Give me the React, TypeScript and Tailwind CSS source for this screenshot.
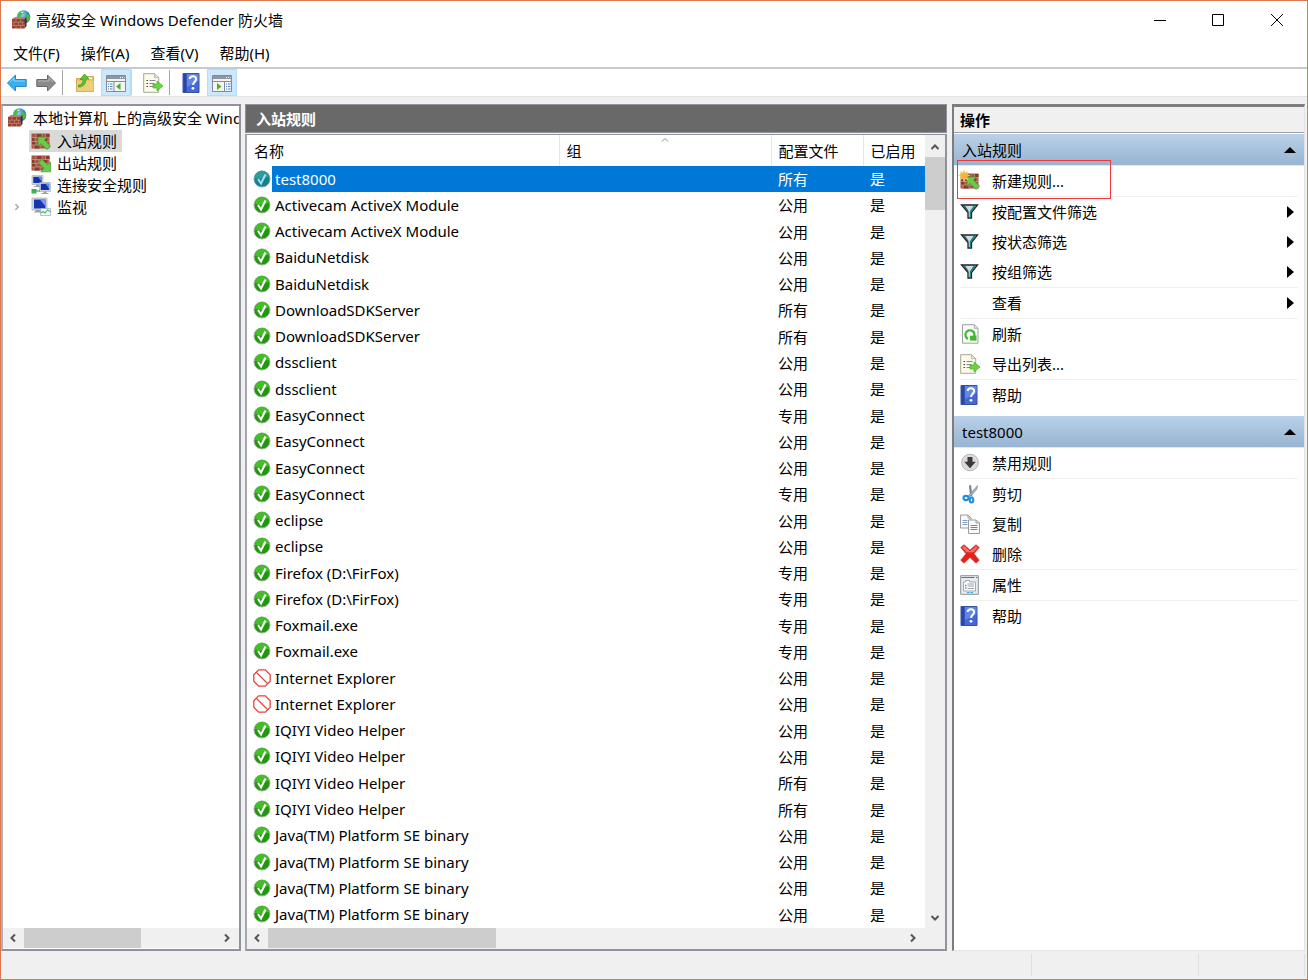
import React from 'react';

type IconProps = { className?: string };

const FirewallIcon = ({ className = 'size-5' }: IconProps) => (
  <svg viewBox="0 0 20 20" className={className} aria-hidden="true">
    <defs>
      <radialGradient id="globe" cx="0.35" cy="0.3" r="0.8">
        <stop offset="0" stopColor="#a9e2fa" />
        <stop offset="0.5" stopColor="#3b95e0" />
        <stop offset="1" stopColor="#123f94" />
      </radialGradient>
    </defs>
    <circle cx="12.5" cy="7" r="6.8" fill="url(#globe)" />
    <path d="M9 1.5c2-1 4-1 5 0l-1 2-2 1-1 2-3 1c-1-2 0-5 2-6zM15 4l3 1 1 3-2 4-2-2v-3l-1-1z" fill="#4dbb4a" />
    <path d="M10 2l2-.6 1 .6-2 1.4z" fill="#e6f7df" />
    <path d="M1 9l3-2h11l-1.5 2z" fill="#c07c66" />
    <path d="M1 9h12.500v9.500H1z" fill="#964230" />
    <path d="M13.500 9L15.500 7v9l-2 2.500z" fill="#5a2419" />
    <path d="M1 12.200h12.500M1 15.400h12.500M5 9v3.200M9.500 9v3.200M3 12.200v3.200M7.500 12.200v3.200M11.500 12.200v3.200M5 15.400v3.100M9.500 15.400v3.100" stroke="#cf9a8a" strokeWidth="0.6" />
  </svg>
);

const RuleIcon = ({ kind }: { kind: 'in' | 'out' | 'new' }) => (
  <svg viewBox="0 0 20 18" className="h-[18px] w-5 shrink-0 overflow-visible" aria-hidden="true">
    <path d="M.5 1.500h18v15H.5z" fill="#a65340" />
    <path d="M5 2h6v3.500H5zM11 5.500h6v4h-6zM1 9.500h4v3.500H1zM3 13h6v3.500H3zM14 2h4.500v3H14zM1 5.500h3v4H1z" fill="#8a3b2b" />
    <path d="M.5 5.500h18M.5 9.500h18M.5 13h18M5 1.500v4M11 1.500v4M14.500 1.500v4M4 5.500v4M8 5.500v4M17 5.500v4M5 9.500V13M11 9.500V13M3 13v3.500M9 13v3.500M15 13v3.500" stroke="#cda195" strokeWidth="0.7" />
    {kind === 'out' ? (
      <path d="M19.500 17.800V8l-3 2.800L11 5.300 7.500 8.800l5.500 5.500-3.200 3.500z" fill="#6cc94b" stroke="#3c9a2a" strokeWidth="0.7" />
    ) : (
      <path d="M7 5h9.500l-3 3 6 6-3.500 3.500-6-6-3 3z" fill="#6cc94b" stroke="#3c9a2a" strokeWidth="0.7" />
    )}
    {kind === 'new' && (
      <path d="M4-2.500l1 3.300 3-1.800-1.500 3.200L10 3.500 6.500 4.700 8 8 5 6.200 4 9.500 3 6.200 0 8l1.500-3.300L-1.500 3.500l3-1.300L0-1l3 1.800z" fill="#f9b52c" stroke="#fde0a0" strokeWidth="0.500" />
    )}
  </svg>
);

const Monitor = ({ x, y }: { x: number; y: number }) => (
  <g transform={`translate(${x} ${y})`}>
    <path d="M0 0h11v9H0z" fill="#d2d7dc" stroke="#a3aab1" strokeWidth="0.6" />
    <path d="M1.300 1.300h8.400v6.200H1.300z" fill="#1430ac" />
    <path d="M6 1.300h3.700v5z" fill="#6d8af0" />
    <path d="M4 9h3v1.500h2v1H2v-1h2z" fill="#9aa2a8" />
  </g>
);

const ConnectionIcon = () => (
  <svg viewBox="0 0 20 20" className="size-5 shrink-0" aria-hidden="true">
    <Monitor x={1} y={.5} />
    <Monitor x={8.5} y={7.5} />
    <path d="M.5 14h5v4.500h-5z" fill="#38b54a" />
    <path d="M5 16h4" stroke="#2c9a3c" />
  </svg>
);

const MonitoringIcon = () => (
  <svg viewBox="0 0 20 20" className="size-5 shrink-0" aria-hidden="true">
    <path d="M1 1h15v12H1z" fill="#d5dae0" stroke="#a3aab1" strokeWidth="0.7" />
    <path d="M3 2.500h11.500v9H3z" fill="#1636b4" />
    <path d="M9 2.500h5.500v7z" fill="#7d96ef" />
    <path d="M5 13h5v2.500H3z" fill="#9aa2a8" />
    <path d="M9.500 11.500h10v7h-10z" fill="#f4fbff" stroke="#8fa9bb" strokeWidth="0.7" />
    <path d="M10 16l2-1.500 2 1.500 2.500-3 3 1.500" fill="none" stroke="#49b558" strokeWidth="1.100" />
  </svg>
);

const ArrowIcon = ({ forward }: { forward?: boolean }) => (
  <svg viewBox="0 0 20 18" className="h-[18px] w-5" aria-hidden="true">
    {forward ? (
      <path d="M19.500 9L11.500 1v4.500H.8v7h10.700V17z" fill="#8b8b8b" stroke="#686868" />
    ) : (
      <path d="M.5 9l8-8v4.500h10.700v7H8.500V17z" fill="#36b0f0" stroke="#2d86bd" />
    )}
    {forward ? <path d="M2 7h11V4l4 4" fill="none" stroke="#b5b5b5" /> : <path d="M3 8l4-4v3h11" fill="none" stroke="#8ad7fa" />}
  </svg>
);

const FolderIcon = () => (
  <svg viewBox="0 0 20 20" className="size-5" aria-hidden="true">
    <path d="M1.500 5.500h6l1.500-2h9.500v15h-17z" fill="#e8c463" stroke="#c99d3c" strokeWidth="0.8" />
    <path d="M12 4.500h5v1.500h-5z" fill="#fff" />
    <path d="M2 8h16.500v10.200H2z" fill="#efcd7a" />
    <path d="M3.500 12C7 12 8 9.500 8 6.500H5L9.500 1 14 6h-3c0 5-3 8-7.500 8z" fill="#58c82c" stroke="#32911a" strokeWidth="0.700" />
  </svg>
);

const PaneIcon = ({ side }: { side: 'left' | 'right' }) => (
  <svg viewBox="0 0 20 18" className="h-[18px] w-5" aria-hidden="true">
    <path d="M.5 1.500h19v16H.5z" fill="#f4f4f4" stroke="#858b94" />
    <path d="M1 2h18v3H1z" fill="#8e959f" />
    <path d="M14 3.500h1M16 3.500h1M18 3.500h.5" stroke="#fff" />
    <path d="M1 7.500h18" stroke="#858b94" />
    {side === 'left' ? (
      <>
        <path d="M8 8v9.500" stroke="#858b94" />
        <path d="M2 10h1m1 0h2.500M2 12.500h1m1 0h2.500M2 15h1m1 0h2.500" stroke="#4d84b8" />
        <path d="M14.500 9v7L10 12.500z" fill="#4faf29" />
      </>
    ) : (
      <>
        <path d="M12.500 8v9.500" stroke="#858b94" />
        <path d="M14 10h1m1 0h2.500M14 12.500h1m1 0h2.500M14 15h1m1 0h2.500" stroke="#4d84b8" />
        <path d="M5 9v7l4.500-3.500z" fill="#4faf29" />
      </>
    )}
  </svg>
);

const ExportIcon = () => (
  <svg viewBox="0 0 20 20" className="size-5 shrink-0" aria-hidden="true">
    <path d="M.7.700h11l4 4v14.600H.7z" fill="#fdfbe8" stroke="#a6a698" />
    <path d="M11.500.7v4h4" fill="#e3e3da" stroke="#a6a698" strokeWidth="0.7" />
    <path d="M3.500 7.500h1.500M3.500 10.500h1.500M3.500 13.500h1.500" stroke="#444" strokeWidth="1.200" />
    <path d="M6.500 7.500h6M6.500 10.500h5M6.500 13.500h5" stroke="#87879b" />
    <path d="M10 11h4V8l6 5-6 5v-3h-4z" fill="#6ad63d" stroke="#3fa325" strokeWidth="0.6" />
  </svg>
);

const HelpIcon = () => (
  <svg viewBox="0 0 20 20" className="size-5 shrink-0" aria-hidden="true">
    <path d="M1 .5h16v19H1z" fill="#4468d6" stroke="#34509f" />
    <path d="M1.500 1h3v18h-3z" fill="#2746a6" />
    <path d="M5 1h11.500v7L5 14z" fill="#6385e3" />
    <path d="M7.700 6c.2-3.800 6.600-3.700 6.400.2-.1 2.500-3 2.600-3 5.800" fill="none" stroke="#fff" strokeWidth="2.100" />
    <circle cx="11" cy="15.300" r="1.400" fill="#fff" />
  </svg>
);

const FunnelIcon = () => (
  <svg viewBox="0 0 20 20" className="size-5 shrink-0" aria-hidden="true">
    <path d="M1.500 3h16l-6 7.500V16H8v-5.500z" fill="#d5dcdd" stroke="#1b2527" strokeWidth="1.300" />
    <path d="M13.500 4H16l-5 6v5.300H9.700V9.500z" fill="#13868a" />
    <path d="M2.800 3.700H5l4 5.800H7.500z" fill="#2c5a5d" />
  </svg>
);

const RefreshIcon = () => (
  <svg viewBox="0 0 20 20" className="size-5 shrink-0" aria-hidden="true">
    <path d="M2.500.7h12l3.500 3.500v15H2.500z" fill="#f8f8f8" stroke="#a1a1a1" />
    <path d="M14.300.7v3.700H18" fill="#ddd" stroke="#a1a1a1" strokeWidth="0.7" />
    <path d="M8 14.800a4.500 4.500 0 1 1 5.500-1.300" fill="none" stroke="#41b832" strokeWidth="2.200" />
    <path d="M10 11.800l6.500-.3v5.200l-6.500-.2z" fill="#41b832" />
  </svg>
);

const DisableIcon = () => (
  <svg viewBox="0 0 20 20" className="size-5 shrink-0" aria-hidden="true">
    <circle cx="10" cy="9.500" r="8.300" fill="#dcdcdc" stroke="#b5b5b5" />
    <path d="M7.500 4h5v4.800h3.300L10 15.300 4.200 8.800h3.300z" fill="#3a3a3a" />
  </svg>
);

const CutIcon = () => (
  <svg viewBox="0 0 20 20" className="size-5 shrink-0" aria-hidden="true">
    <path d="M9 1.500l1 9.500 2.500 2L11 1z" fill="#73828f" />
    <path d="M17.500 1.500L9 11l-1 2 3-1L17 5z" fill="#a1b0bb" stroke="#6c7b87" strokeWidth="0.500" />
    <ellipse cx="6" cy="14" rx="2.500" ry="2.100" fill="none" stroke="#1e8fe0" strokeWidth="2.100" />
    <ellipse cx="11.500" cy="16" rx="1.800" ry="2.500" fill="none" stroke="#1e8fe0" strokeWidth="2.100" />
  </svg>
);

const CopyIcon = () => (
  <svg viewBox="0 0 20 20" className="size-5 shrink-0" aria-hidden="true">
    <path d="M.5 1h7.500l3 3v10H.5z" fill="#fafafa" stroke="#9b9b9b" />
    <path d="M8 1v3h3" fill="none" stroke="#9b9b9b" />
    <path d="M2.500 6.500h5M2.500 8.500h5M2.500 10.500h5" stroke="#7e9ec6" />
    <path d="M8.500 6h7.500l3.500 3v10.500h-11z" fill="#fafafa" stroke="#9b9b9b" />
    <path d="M16 6v3h3.500" fill="none" stroke="#9b9b9b" />
    <path d="M10.500 11.500h7M10.500 13.500h7M10.500 15.500h7" stroke="#6488bd" />
  </svg>
);

const DeleteIcon = () => (
  <svg viewBox="0 0 20 20" className="size-5 shrink-0" aria-hidden="true">
    <path d="M.7 3.500L4 .7l6 5.300L16 .7l3.300 2.800L14 9.700l5.300 6.500-3.300 3-6-5.700-6 5.700-3.300-3L6 9.700z" fill="#e2221c" stroke="#c9352f" strokeWidth="0.600" />
    <path d="M2 3.500L4 2l6 5.300L16 2l2 1.500-4.500 4.700h-7z" fill="#f0716b" />
  </svg>
);

const PropertiesIcon = () => (
  <svg viewBox="0 0 20 20" className="size-5 shrink-0" aria-hidden="true">
    <path d="M.7.700h17.600v18.600H.7z" fill="#e9ecef" stroke="#8b929a" />
    <path d="M1.500 2.500h13M16 2.500h1.500" stroke="#69727c" />
    <path d="M3.500 7h2V5.500h4V7h6v9h-12z" fill="#fff" stroke="#a3abb3" />
    <path d="M5 10.500h1.500M5 13h1.500" stroke="#27a8d8" strokeWidth="1.300" />
    <path d="M7.500 9h6.500M7.500 11h6.500M7.500 13.500h6.500" stroke="#9aa1a9" />
    <path d="M7 17.700h2.500m1 0H13" stroke="#35b3e6" strokeWidth="1.300" />
  </svg>
);

const StatusIcon = ({ status, selected }: { status: 'allow' | 'block'; selected?: boolean }) => (
  <svg viewBox="0 0 18 18" className="size-[18px] shrink-0" aria-hidden="true">
    {status === 'block' ? (
      <>
        <path d="M5.700.8h6.600l4.900 4.900v6.600l-4.900 4.900H5.700L.8 12.300V5.700z" fill="#fff" stroke="#e3473e" strokeWidth="1.300" />
        <path d="M3.500 3.500l11 11" stroke="#e3473e" strokeWidth="1.300" />
      </>
    ) : (
      <>
        <circle cx="9" cy="9" r="8" fill={selected ? '#14818c' : '#22960f'} stroke={selected ? '#6ba6c2' : '#9db39a'} />
        <path d="M2 8a7 6.800 0 0 1 14-1c-4 0-6 3-14 1z" fill={selected ? '#2f9c9a' : '#45bc2a'} />
        <path d="M5 9l3 4.500L12.500 4.500" fill="none" stroke={selected ? '#a3dcf7' : '#fff'} strokeWidth="2.100" />
      </>
    )}
  </svg>
);

const Chevron = ({ d, className = 'size-5' }: { d: string; className?: string }) => (
  <svg viewBox="0 0 20 20" className={className} fill="none" stroke="#555" strokeWidth="2" aria-hidden="true">
    <path d={d} />
  </svg>
);

const LEFT = 'M12 6.500L8.500 10l3.500 3.500';
const RIGHT = 'M8 6.500l3.500 3.500L8 13.500';
const UP = 'M6.500 12L10 8.500l3.500 3.500';
const DOWN = 'M6.500 8l3.500 3.500L13.500 8';

const HorizontalScrollbar = ({ thumb }: { thumb: string }) => (
  <div className="flex h-5 min-w-0 flex-1 bg-[#f0f0f0]">
    <button aria-label="向左滚动" className="w-5 shrink-0"><Chevron d={LEFT} /></button>
    <div className="min-w-0 flex-1 px-px">
      <div className={`h-5 bg-[#cdcdcd] ${thumb}`} />
    </div>
    <button aria-label="向右滚动" className="flex w-[22px] shrink-0"><Chevron d={RIGHT} /></button>
  </div>
);

const rules: [string, string, 'allow' | 'block'][] = [
  ['test8000', '所有', 'allow'],
  ['Activecam ActiveX Module', '公用', 'allow'],
  ['Activecam ActiveX Module', '公用', 'allow'],
  ['BaiduNetdisk', '公用', 'allow'],
  ['BaiduNetdisk', '公用', 'allow'],
  ['DownloadSDKServer', '所有', 'allow'],
  ['DownloadSDKServer', '所有', 'allow'],
  ['dssclient', '公用', 'allow'],
  ['dssclient', '公用', 'allow'],
  ['EasyConnect', '专用', 'allow'],
  ['EasyConnect', '公用', 'allow'],
  ['EasyConnect', '公用', 'allow'],
  ['EasyConnect', '专用', 'allow'],
  ['eclipse', '公用', 'allow'],
  ['eclipse', '公用', 'allow'],
  ['Firefox (D:\\FirFox)', '专用', 'allow'],
  ['Firefox (D:\\FirFox)', '专用', 'allow'],
  ['Foxmail.exe', '专用', 'allow'],
  ['Foxmail.exe', '专用', 'allow'],
  ['Internet Explorer', '公用', 'block'],
  ['Internet Explorer', '公用', 'block'],
  ['IQIYI Video Helper', '公用', 'allow'],
  ['IQIYI Video Helper', '公用', 'allow'],
  ['IQIYI Video Helper', '所有', 'allow'],
  ['IQIYI Video Helper', '所有', 'allow'],
  ['Java(TM) Platform SE binary', '公用', 'allow'],
  ['Java(TM) Platform SE binary', '公用', 'allow'],
  ['Java(TM) Platform SE binary', '公用', 'allow'],
  ['Java(TM) Platform SE binary', '公用', 'allow'],
];

interface Action {
  label: string;
  icon?: React.ReactNode;
  submenu?: boolean;
  highlight?: boolean;
}

// Each inner array is a group, divided from the next by a thin line
const ruleActions: Action[][] = [
  [{ label: '新建规则...', icon: <RuleIcon kind="new" />, highlight: true }],
  [
    { label: '按配置文件筛选', icon: <FunnelIcon />, submenu: true },
    { label: '按状态筛选', icon: <FunnelIcon />, submenu: true },
    { label: '按组筛选', icon: <FunnelIcon />, submenu: true },
  ],
  [{ label: '查看', submenu: true }],
  [
    { label: '刷新', icon: <RefreshIcon /> },
    { label: '导出列表...', icon: <ExportIcon /> },
  ],
  [{ label: '帮助', icon: <HelpIcon /> }],
];

const selectedActions: Action[][] = [
  [{ label: '禁用规则', icon: <DisableIcon /> }],
  [
    { label: '剪切', icon: <CutIcon /> },
    { label: '复制', icon: <CopyIcon /> },
    { label: '删除', icon: <DeleteIcon /> },
  ],
  [{ label: '属性', icon: <PropertiesIcon /> }],
  [{ label: '帮助', icon: <HelpIcon /> }],
];

const ActionSection = ({ title, groups }: { title: string; groups: Action[][] }) => (
  <section className="mb-[6px]">
    <h3>
      <button className="flex h-8 w-full items-center justify-between border-b border-[#dce9f7] bg-linear-to-b from-[#b9d1ea] to-[#99b4d1] px-2 text-left">
        {title}
        <svg viewBox="0 0 12 6" className="h-[6px] w-3" aria-hidden="true"><path d="M0 6l6-6 6 6z" /></svg>
      </button>
    </h3>
    {groups.map((group, i) => (
      <ul key={i} className="mx-[6px] border-b border-[#f0f0f0] last:border-b-0">
        {group.map((action) => (
          <li key={action.label} className="relative">
            <button className="flex h-[30px] w-full items-center gap-3 pr-1 text-left">
              <span className="flex size-5 shrink-0 items-center justify-center">{action.icon}</span>
              <span className="flex-1">{action.label}</span>
              {action.submenu && (
                <svg viewBox="0 0 7 12" className="h-3 w-[7px]" aria-hidden="true"><path d="M0 0l7 6-7 6z" /></svg>
              )}
            </button>
            {action.highlight && (
              <span className="pointer-events-none absolute -top-[6px] -left-[3px] h-[39px] w-[154px] border border-[#f03a3a]" />
            )}
          </li>
        ))}
      </ul>
    ))}
  </section>
);

const TreeItem = ({ label, icon, selected, expandable }: { label: string; icon: React.ReactNode; selected?: boolean; expandable?: boolean }) => (
  <li className="flex h-[22px] items-center pl-[9px]">
    <span className="flex w-[17px] shrink-0">
      {expandable && <Chevron d={RIGHT} className="-ml-[3px] size-4 opacity-50" />}
    </span>
    <button className={`flex h-[22px] items-center gap-[6px] pr-[5px] pl-[2px] ${selected ? 'bg-[#d9d9d9]' : ''}`}>
      {icon}
      {label}
    </button>
  </li>
);

const App: React.FC = () => {
  return (
    <div className="flex h-screen min-w-[900px] flex-col overflow-hidden border border-[#db7850] bg-[#f0f0f0] text-[15px] leading-[22px] text-black [font-family:'Noto_Sans','Noto_Sans_CJK_SC',sans-serif]">
      <header className="bg-white">
        <div className="flex h-[37px] items-center">
          <FirewallIcon className="mr-[5px] ml-[10px] size-5" />
          <h1 className="flex-1">高级安全 Windows Defender 防火墙</h1>
          <button aria-label="最小化" className="flex h-full w-[58px] items-center justify-center">
            <svg viewBox="0 0 12 12" className="size-3" stroke="#000" aria-hidden="true"><path d="M0 6.500h12" /></svg>
          </button>
          <button aria-label="最大化" className="flex h-full w-[58px] items-center justify-center">
            <svg viewBox="0 0 12 12" className="size-3" fill="none" stroke="#000" aria-hidden="true"><path d="M.5.500h11v11H.5z" /></svg>
          </button>
          <button aria-label="关闭" className="flex h-full w-[60px] items-center justify-center">
            <svg viewBox="0 0 12 12" className="size-3" stroke="#000" aria-hidden="true"><path d="M0 0l12 12M12 0L0 12" /></svg>
          </button>
        </div>
        <nav className="flex h-[29px] items-center gap-[21px] pl-3">
          <button>文件(F)</button>
          <button>操作(A)</button>
          <button>查看(V)</button>
          <button>帮助(H)</button>
        </nav>
        <div className="flex h-[30px] items-center border-t-2 border-b border-t-[#c3cbd1] border-b-[#e3e3e3] pl-[6px]">
          <button aria-label="后退" className="mr-[9px]"><ArrowIcon /></button>
          <button aria-label="前进"><ArrowIcon forward /></button>
          <span className="mx-[6px] h-[25px] w-px bg-[#a5a5a5]" />
          <button aria-label="上移" className="mx-[6px]"><FolderIcon /></button>
          <button aria-label="显示/隐藏控制台树" aria-pressed="true" className="flex h-[27px] w-[30px] items-center justify-center border border-[#b5dcf9] bg-[#cce8ff]"><PaneIcon side="left" /></button>
          <span className="h-[25px] w-px bg-[#d0d0d0]" />
          <button aria-label="导出列表" className="mr-[6px] ml-[11px]"><ExportIcon /></button>
          <span className="h-[25px] w-px bg-[#a5a5a5]" />
          <button aria-label="帮助" className="mr-[5px] ml-3"><HelpIcon /></button>
          <button aria-label="显示/隐藏操作窗格" aria-pressed="true" className="flex h-[27px] w-[30px] items-center justify-center border border-[#b5dcf9] bg-[#cce8ff]"><PaneIcon side="right" /></button>
        </div>
      </header>

      <main className="flex min-h-0 flex-1 gap-1 pt-[7px]">
        <aside className="flex w-60 shrink-0 flex-col border-2 border-[#8f949c] border-l-[#b0b4ba] bg-white">
          <div className="min-h-0 flex-1 overflow-hidden whitespace-nowrap">
            <button className="flex h-6 items-center gap-[6px] pl-1">
              <FirewallIcon className="size-5 shrink-0" />
              本地计算机 上的高级安全 Wind
            </button>
            <ul>
              <TreeItem label="入站规则" icon={<RuleIcon kind="in" />} selected />
              <TreeItem label="出站规则" icon={<RuleIcon kind="out" />} />
              <TreeItem label="连接安全规则" icon={<ConnectionIcon />} />
              <TreeItem label="监视" icon={<MonitoringIcon />} expandable />
            </ul>
          </div>
          <div className="flex pb-px"><HorizontalScrollbar thumb="w-[61%]" /></div>
        </aside>

        <section className="flex min-w-0 flex-1 flex-col">
          <h2 className="flex h-[29px] shrink-0 items-center border border-[#8f949c] bg-[#696969] pl-[10px] font-bold text-white">入站规则</h2>
          <div className="mt-px flex min-h-0 flex-1 flex-col border-2 border-t border-[#8f949c] border-l-[#a5a9af] bg-white">
            <div className="flex min-h-0 flex-1">
              <div className="min-w-0 flex-1 overflow-hidden">
                <table className="h-full w-full table-fixed border-collapse text-left">
                  <thead>
                    <tr className="h-[31px]">
                      <th className="w-[312px] border-r border-[#e5e5e5] p-0 pl-[7px] font-normal">名称</th>
                      <th className="relative border-r border-[#e5e5e5] p-0 pl-[7px] font-normal">
                        组
                        <svg viewBox="0 0 8 4" className="absolute top-[3px] left-1/2 h-1 w-2 -translate-x-1/2" fill="none" stroke="#888" aria-hidden="true"><path d="M1 3.500l3-3 3 3" /></svg>
                      </th>
                      <th className="w-[92px] border-r border-[#e5e5e5] p-0 pl-[7px] font-normal">配置文件</th>
                      <th className="w-[62px] p-0 pl-[7px] font-normal">已启用</th>
                    </tr>
                  </thead>
                  <tbody>
                    {rules.map(([name, profile, status], i) => (
                      <tr key={i} className={i === 0 ? 'bg-linear-to-r from-white from-[25px] to-[#0078d7] to-[25px] text-white' : ''}>
                        <td className="p-0">
                          <div className="flex items-center gap-1 pb-px pl-[6px]">
                            <StatusIcon status={status} selected={i === 0} />
                            {name}
                          </div>
                        </td>
                        <td className="p-0" />
                        <td className="p-0 pl-[7px]">{profile}</td>
                        <td className="p-0 pl-[7px]">是</td>
                      </tr>
                    ))}
                  </tbody>
                </table>
              </div>
              <div className="flex w-5 shrink-0 flex-col bg-[#f0f0f0] pt-[2px]">
                <button aria-label="向上滚动" className="size-5 shrink-0"><Chevron d={UP} /></button>
                <div className="flex-1">
                  <div className="h-[7%] w-5 bg-[#cdcdcd]" />
                </div>
                <button aria-label="向下滚动" className="size-5 shrink-0"><Chevron d={DOWN} /></button>
              </div>
            </div>
            <div className="flex bg-[#f0f0f0] pr-5 pb-px"><HorizontalScrollbar thumb="w-[36%]" /></div>
          </div>
        </section>

        <aside className="mr-[2px] ml-px flex w-[353px] shrink-0 flex-col border-t-3 border-r border-b border-l-2 border-t-[#7d7d7d] border-r-[#e3e3e3] border-b-[#e3e3e3] border-l-[#7d7d7d] bg-white">
          <h2 className="mb-px flex h-[26px] shrink-0 items-center border-b border-[#a0a0a0] bg-[#f0f0f0] pl-[6px] font-bold">操作</h2>
          <ActionSection title="入站规则" groups={ruleActions} />
          <ActionSection title="test8000" groups={selectedActions} />
        </aside>
      </main>

      <footer className="flex h-7 shrink-0 justify-end py-[3px]">
        <div className="w-[167px] border-l border-[#dfdfdf]" />
        <div className="w-[107px] border-x border-[#dfdfdf]" />
        <div className="w-[2px]" />
      </footer>
    </div>
  );
};

export default App;
